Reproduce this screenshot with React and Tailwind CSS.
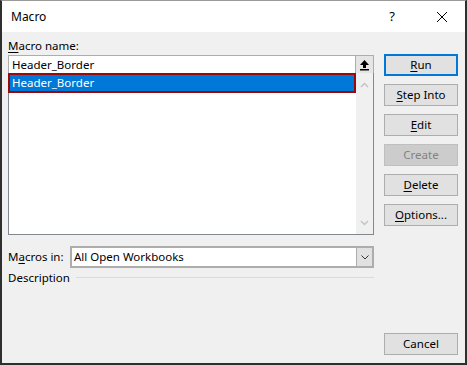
import React from "react";

const font = "font-['Segoe_UI','Noto_Sans',sans-serif]";

const Btn = ({ children, primary, disabled, className = "" }) => (
  <div
    className={`h-[22px] w-[74px] flex items-center justify-center text-[11.5px] ${
      primary
        ? "border-2 border-[#0078d7] bg-[#e1e1e1] text-black"
        : disabled
        ? "border border-[#bfbfbf] bg-[#cccccc] text-[#838383]"
        : "border border-[#adadad] bg-[#e1e1e1] text-black"
    } ${className}`}
  >
    {children}
  </div>
);

const U = ({ children }) => <span className="underline underline-offset-2">{children}</span>;

export default function App() {
  return (
    <div
      className={`${font} w-[467px] h-[365px] flex flex-col bg-[#f0f0f0] border-l-2 border-r-2 border-b-2 border-t border-l-[#2f2f2f] border-r-[#2f2f2f] border-b-[#2f2f2f] border-t-[#9a9a9a] text-black`}
    >
      {/* title bar */}
      <div className="h-[31px] bg-white flex items-center shrink-0">
        <span className="pl-[9px] text-[12px]">Macro</span>
        <span className="ml-auto text-[13px] w-[12px] text-center mr-[38px]">?</span>
        <svg width="12" height="12" viewBox="0 0 12 12" className="mr-[17px]">
          <path d="M1 1 L11 11 M11 1 L1 11" stroke="#000" strokeWidth="1" />
        </svg>
      </div>

      {/* body */}
      <div className="flex-1 flex pl-[6px] pr-[7px] pb-[8px]">
        <div className="w-[366px] flex flex-col">
          <div className="text-[11.5px] h-[16px] mt-[6px] leading-[16px]">
            <U>M</U>acro name:
          </div>
          <div className="mt-[1px] h-[18px] border border-b-0 border-[#abadb3] bg-white flex">
            <div className="flex-1 text-[11.5px] pl-[3px] leading-[17px]">Header_Border</div>
            <div className="w-[18px] h-[17px] border-l border-[#abadb3] bg-[#e5e5e5] flex items-center justify-center">
              <svg width="11" height="12" viewBox="0 0 11 12">
                <path d="M5.5 1 L10 6 L7 6 L7 9 L4 9 L4 6 L1 6 Z" fill="#000" />
                <rect x="1" y="10" width="9" height="1.5" fill="#000" />
              </svg>
            </div>
          </div>
          <div className="h-[162px] border border-t-0 border-[#828790] bg-white flex">
            <div className="flex-1 -ml-px">
              <div className="h-[20px] border-2 border-[#9b0a0a] bg-[#0078d7] text-white text-[11.5px] pl-[2px] leading-[16px]">
                Header_Border
              </div>
            </div>
            <div className="w-[17px] bg-[#f0f0f0] flex flex-col items-center justify-between pt-[9px] pb-[8px]">
              <svg width="9" height="6" viewBox="0 0 9 6">
                <path d="M1 5 L4.5 1.5 L8 5" stroke="#c2c2c2" strokeWidth="1.4" fill="none" />
              </svg>
              <svg width="9" height="6" viewBox="0 0 9 6">
                <path d="M1 1 L4.5 4.5 L8 1" stroke="#c2c2c2" strokeWidth="1.4" fill="none" />
              </svg>
            </div>
          </div>

          <div className="mt-[11px] flex items-center h-[22px]">
            <div className="w-[62px] text-[11.5px]">
              M<U>a</U>cros in:
            </div>
            <div className="flex-1 h-[22px] border-2 border-[#adadad] bg-white flex">
              <div className="flex-1 text-[11.5px] pl-[2px] leading-[18px]">All Open Workbooks</div>
              <div className="w-[16px] bg-[#e1e1e1] border-l border-[#adadad] flex items-center justify-center">
                <svg width="8" height="5" viewBox="0 0 8 5">
                  <path d="M0.5 0.5 L4 4 L7.5 0.5" stroke="#333" strokeWidth="1" fill="none" />
                </svg>
              </div>
            </div>
          </div>
          <div className="mt-[2px] flex items-center h-[16px]">
            <span className="text-[11.5px] leading-[14px]">Description</span>
            <div className="flex-1 ml-[6px] h-px bg-[#dadada] -mt-[1px]"></div>
          </div>
        </div>

        <div className="ml-[10px] flex flex-col gap-[8px] pt-[22px]">
          <Btn primary>
            <U>R</U>un
          </Btn>
          <Btn>
            <U>S</U>tep Into
          </Btn>
          <Btn>
            <U>E</U>dit
          </Btn>
          <Btn disabled>Create</Btn>
          <Btn>
            <U>D</U>elete
          </Btn>
          <Btn>
            <U>O</U>ptions...
          </Btn>
          <Btn className="mt-auto">Cancel</Btn>
        </div>
      </div>
    </div>
  );
}
